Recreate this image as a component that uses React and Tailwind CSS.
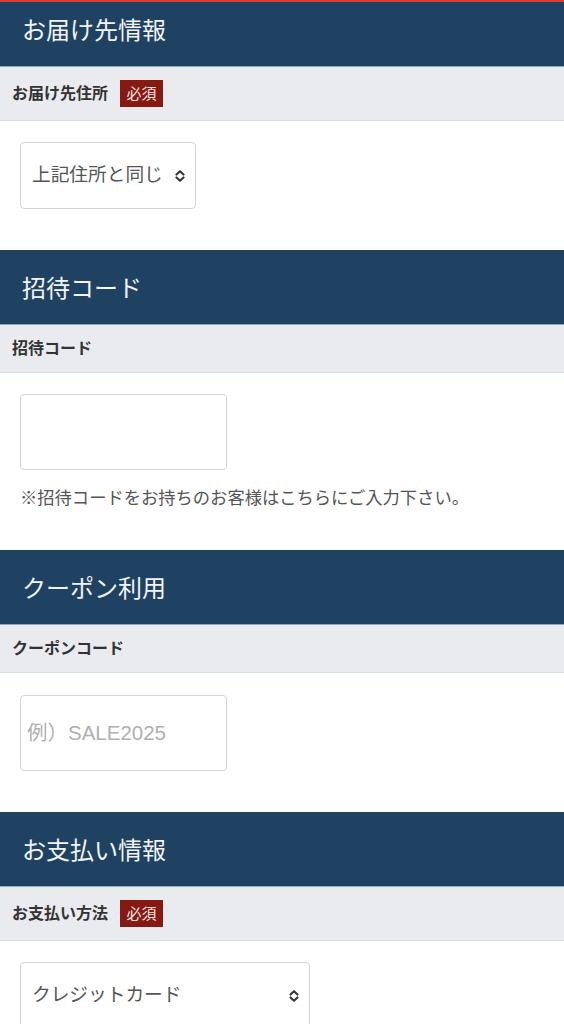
import React from "react";

const font = { fontFamily: '"Liberation Sans", "Noto Sans CJK JP", "Noto Sans", sans-serif' };

function Header({ title }) {
  return (
    <div className="h-[75px] bg-[#1f4263] flex items-center pl-[22px] pt-[3px] border-b border-[#8fa7bf]">
      <span className="text-[24px] text-[#f2f4f7] leading-none">{title}</span>
    </div>
  );
}

function LabelBar({ label, required }) {
  return (
    <div className="bg-[#eaebef] border-b border-[#d3e0ec] pl-[12px] flex items-center gap-[12px] py-[13px]">
      <span className="text-[16px] font-bold text-[#333] leading-[21px]">{label}</span>
      {required && (
        <span className="h-[27px] w-[43px] bg-[#861912] text-[#f3e6e4] text-[15px] flex items-center justify-center leading-none">
          必須
        </span>
      )}
    </div>
  );
}

function Chevron() {
  return (
    <svg width="12" height="14" viewBox="0 0 12 14" fill="none" stroke="#3a3a3a" strokeWidth="2.2" strokeLinecap="round" strokeLinejoin="round">
      <path d="M2.5 5.5 L6 2.2 L9.5 5.5" />
      <path d="M2.5 8.5 L6 11.8 L9.5 8.5" />
    </svg>
  );
}

function SelectBox({ text, width }) {
  return (
    <div className={`${width} h-[67px] border-[1.5px] border-[#d4d4d4] rounded-[4px] flex items-center justify-between pl-[11px] pr-[9px] bg-white`}>
      <span className="text-[18.7px] text-[#555]">{text}</span>
      <Chevron />
    </div>
  );
}

export default function App() {
  return (
    <div className="relative w-[564px] bg-white overflow-hidden" style={font}>
      <div className="absolute top-0 left-0 right-0 h-[2px] bg-[#d8403a] z-10" />
      <div className="-mt-[8px]">
        <Header title="お届け先情報" />
        <LabelBar label="お届け先住所" required />
        <div className="pt-[21px] pb-[41px] px-[20px]">
          <SelectBox text="上記住所と同じ" width="w-[176px]" />
        </div>

        <Header title="招待コード" />
        <LabelBar label="招待コード" />
        <div className="pt-[21px] pb-[40px] px-[20px]">
          <div className="w-[207px] h-[76px] border-[1.5px] border-[#d4d4d4] rounded-[4px]" />
          <p className="mt-[16px] text-[17.3px] text-[#555] leading-[24px]">※招待コードをお持ちのお客様はこちらにご入力下さい。</p>
        </div>

        <Header title="クーポン利用" />
        <LabelBar label="クーポンコード" />
        <div className="pt-[22px] pb-[41px] px-[20px]">
          <div className="w-[207px] h-[76px] border-[1.5px] border-[#d4d4d4] rounded-[4px] flex items-center pl-[6px]">
            <span className="text-[20.5px] text-[#b0b0b0]">例）SALE2025</span>
          </div>
        </div>

        <Header title="お支払い情報" />
        <LabelBar label="お支払い方法" required />
        <div className="pt-[21px] pb-[41px] px-[20px]">
          <SelectBox text="クレジットカード" width="w-[290px]" />
        </div>
      </div>
    </div>
  );
}
